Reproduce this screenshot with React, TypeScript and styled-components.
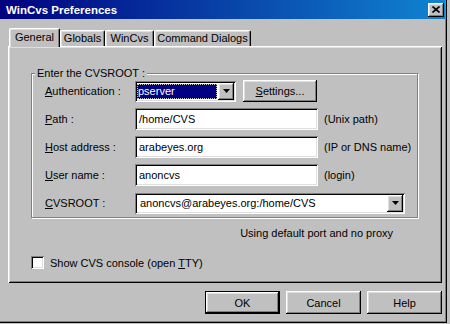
import styled, { createGlobalStyle } from 'styled-components';

const GlobalStyle = createGlobalStyle`
  html, body {
    margin: 0;
    padding: 0;
    background: #c0c0c0;
  }
  body {
    font-family: "Liberation Sans", Arial, sans-serif;
    font-size: 11px;
    color: #000;
  }
`;

const raised = `
  box-shadow: inset -1px -1px #000, inset 1px 1px #fff, inset -2px -2px #808080, inset 2px 2px #dfdfdf;
`;
const sunken = `
  box-shadow: inset 1px 1px #808080, inset -1px -1px #fff, inset 2px 2px #000, inset -2px -2px #dfdfdf;
`;

export default function App() {
  return (
    <Frame>
      <GlobalStyle />
      <Window>
        <TitleBar>
          <TitleText>WinCvs Preferences</TitleText>
          <CloseButton>
            <svg width="8" height="7" viewBox="0 0 8 7">
              <path d="M0.5 0.5L7.5 6.5M7.5 0.5L0.5 6.5" stroke="#000" strokeWidth="1.6" />
            </svg>
          </CloseButton>
        </TitleBar>
        <Body>
          <TabStrip>
            <Tab selected w={51}>General</Tab>
            <Tab w={45}>Globals</Tab>
            <Tab w={49}>WinCvs</Tab>
            <Tab w={97}>Command Dialogs</Tab>
          </TabStrip>
          <Panel>
            <GroupBox>
              <Legend>Enter the CVSROOT :</Legend>
              <FieldRow>
                <FieldLabel><u>A</u>uthentication :</FieldLabel>
                <Combo w={101}>
                  <ComboValue selected>pserver</ComboValue>
                  <DropButton><Arrow /></DropButton>
                </Combo>
                <PushButton w={74} h={22} style={{ marginLeft: 7 }}><u>S</u>ettings...</PushButton>
              </FieldRow>
              <FieldRow>
                <FieldLabel><u>P</u>ath :</FieldLabel>
                <TextField>/home/CVS</TextField>
                <Hint>(Unix path)</Hint>
              </FieldRow>
              <FieldRow>
                <FieldLabel><u>H</u>ost address :</FieldLabel>
                <TextField>arabeyes.org</TextField>
                <Hint>(IP or DNS name)</Hint>
              </FieldRow>
              <FieldRow>
                <FieldLabel><u>U</u>ser name :</FieldLabel>
                <TextField>anoncvs</TextField>
                <Hint>(login)</Hint>
              </FieldRow>
              <FieldRow>
                <FieldLabel><u>C</u>VSROOT :</FieldLabel>
                <Combo w={270}>
                  <ComboValue>anoncvs@arabeyes.org:/home/CVS</ComboValue>
                  <DropButton><Arrow /></DropButton>
                </Combo>
              </FieldRow>
            </GroupBox>
            <Note>Using default port and no proxy</Note>
            <CheckRow>
              <CheckBox />
              <span>Show CVS console (open <u>T</u>TY)</span>
            </CheckRow>
          </Panel>
          <ButtonRow>
            <PushButton w={75} h={23} isDefault>OK</PushButton>
            <PushButton w={75} h={23}>Cancel</PushButton>
            <PushButton w={75} h={23}>Help</PushButton>
          </ButtonRow>
        </Body>
      </Window>
    </Frame>
  );
}

function Arrow() {
  return (
    <svg width="7" height="4" viewBox="0 0 7 4">
      <path d="M0 0H7L3.5 4Z" fill="#000" />
    </svg>
  );
}

const Frame = styled.div`
  width: 450px;
  height: 324px;
  box-sizing: border-box;
  padding: 0 3px 1px 0;
  background: #c0c0c0;
  overflow: hidden;
`;

const Window = styled.div`
  width: 447px;
  height: 323px;
  box-sizing: border-box;
  border-right: 1px solid #000;
  border-bottom: 1px solid #000;
  box-shadow: inset -1px -1px #808080;
  display: flex;
  flex-direction: column;
`;

const TitleBar = styled.div`
  height: 19px;
  margin-right: 1px;
  display: flex;
  align-items: center;
  padding: 0 1px 0 6px;
  background: linear-gradient(to right, #000080, #1084d0);
`;

const TitleText = styled.span`
  color: #fff;
  font-weight: 700;
  font-size: 11.5px;
  flex: 1;
`;

const CloseButton = styled.div`
  width: 16px;
  height: 14px;
  box-sizing: border-box;
  background: #c0c0c0;
  display: flex;
  align-items: center;
  justify-content: center;
  padding-bottom: 1px;
  ${raised}
`;

const Body = styled.div`
  padding: 9px 0 0 8px;
  display: flex;
  flex-direction: column;
`;

const TabStrip = styled.div`
  display: flex;
  align-items: flex-end;
  padding-left: 1px;
  height: 18px;
`;

const Tab = styled.div<{ selected?: boolean; w: number }>`
  position: relative;
  z-index: ${(p) => (p.selected ? 2 : 1)};
  width: ${(p) => p.w}px;
  height: ${(p) => (p.selected ? 19 : 16)}px;
  margin-bottom: ${(p) => (p.selected ? -1 : 0)}px;
  box-sizing: border-box;
  background: #c0c0c0;
  border-top: 1px solid #fff;
  border-left: 1px solid #fff;
  border-right: 1px solid #000;
  border-radius: 2px 2px 0 0;
  box-shadow: inset -1px 0 #808080, inset 1px 1px #dfdfdf;
  display: flex;
  justify-content: center;
  padding-top: ${(p) => (p.selected ? 2 : 1)}px;
  line-height: 13px;
`;

const Panel = styled.div`
  position: relative;
  z-index: 1;
  width: 434px;
  height: 237px;
  box-sizing: border-box;
  padding: 27px 24px 0 23px;
  background: #c0c0c0;
  box-shadow: inset 1px 1px #fff, inset -1px -1px #000, inset 2px 2px #dfdfdf, inset -2px -2px #808080;
  display: flex;
  flex-direction: column;
`;

const GroupBox = styled.div`
  position: relative;
  border: 1px solid #808080;
  box-shadow: inset 1px 1px #fff, 1px 1px #fff;
  padding: 6px 0 3px 13px;
  display: flex;
  flex-direction: column;
  gap: 6px;
`;

const Legend = styled.span`
  position: absolute;
  top: -7px;
  left: 3px;
  padding: 0 2px;
  line-height: 13px;
  background: #c0c0c0;
`;

const FieldRow = styled.div`
  display: flex;
  align-items: center;
  height: 22px;
`;

const FieldLabel = styled.span`
  width: 90px;
`;

const TextField = styled.div`
  width: 183px;
  height: 22px;
  box-sizing: border-box;
  background: #fff;
  padding: 0 4px;
  display: flex;
  align-items: center;
  ${sunken}
`;

const Hint = styled.span`
  margin-left: 6px;
`;

const Combo = styled.div<{ w: number }>`
  width: ${(p) => p.w}px;
  height: 21px;
  box-sizing: border-box;
  background: #fff;
  padding: 2px;
  display: flex;
  ${sunken}
`;

const ComboValue = styled.div<{ selected?: boolean }>`
  flex: 1;
  display: flex;
  align-items: center;
  margin: ${(p) => (p.selected ? '1px 1px 1px 0' : '0')};
  padding-left: ${(p) => (p.selected ? 1 : 3)}px;
  background: ${(p) => (p.selected ? '#000080' : 'transparent')};
  color: ${(p) => (p.selected ? '#fff' : '#000')};
  outline: ${(p) => (p.selected ? '1px dotted #c0c0c0' : 'none')};
  outline-offset: -1px;
`;

const DropButton = styled.div`
  width: 16px;
  height: 17px;
  box-sizing: border-box;
  background: #c0c0c0;
  display: flex;
  align-items: center;
  justify-content: center;
  ${raised}
`;

const PushButton = styled.div<{ w: number; h: number; isDefault?: boolean }>`
  width: ${(p) => p.w}px;
  height: ${(p) => p.h}px;
  box-sizing: border-box;
  background: #c0c0c0;
  border: ${(p) => (p.isDefault ? '1px solid #000' : 'none')};
  display: flex;
  align-items: center;
  justify-content: center;
  ${raised}
`;

const Note = styled.div`
  display: flex;
  justify-content: flex-end;
  padding-right: 25px;
  margin-top: 9px;
  line-height: 13px;
`;

const CheckRow = styled.div`
  display: flex;
  align-items: center;
  margin-top: 16px;
  height: 13px;
`;

const CheckBox = styled.div`
  width: 13px;
  height: 13px;
  box-sizing: border-box;
  background: #fff;
  margin-right: 6px;
  ${sunken}
`;

const ButtonRow = styled.div`
  width: 434px;
  display: flex;
  justify-content: flex-end;
  gap: 6px;
  margin-top: 8px;
`;
